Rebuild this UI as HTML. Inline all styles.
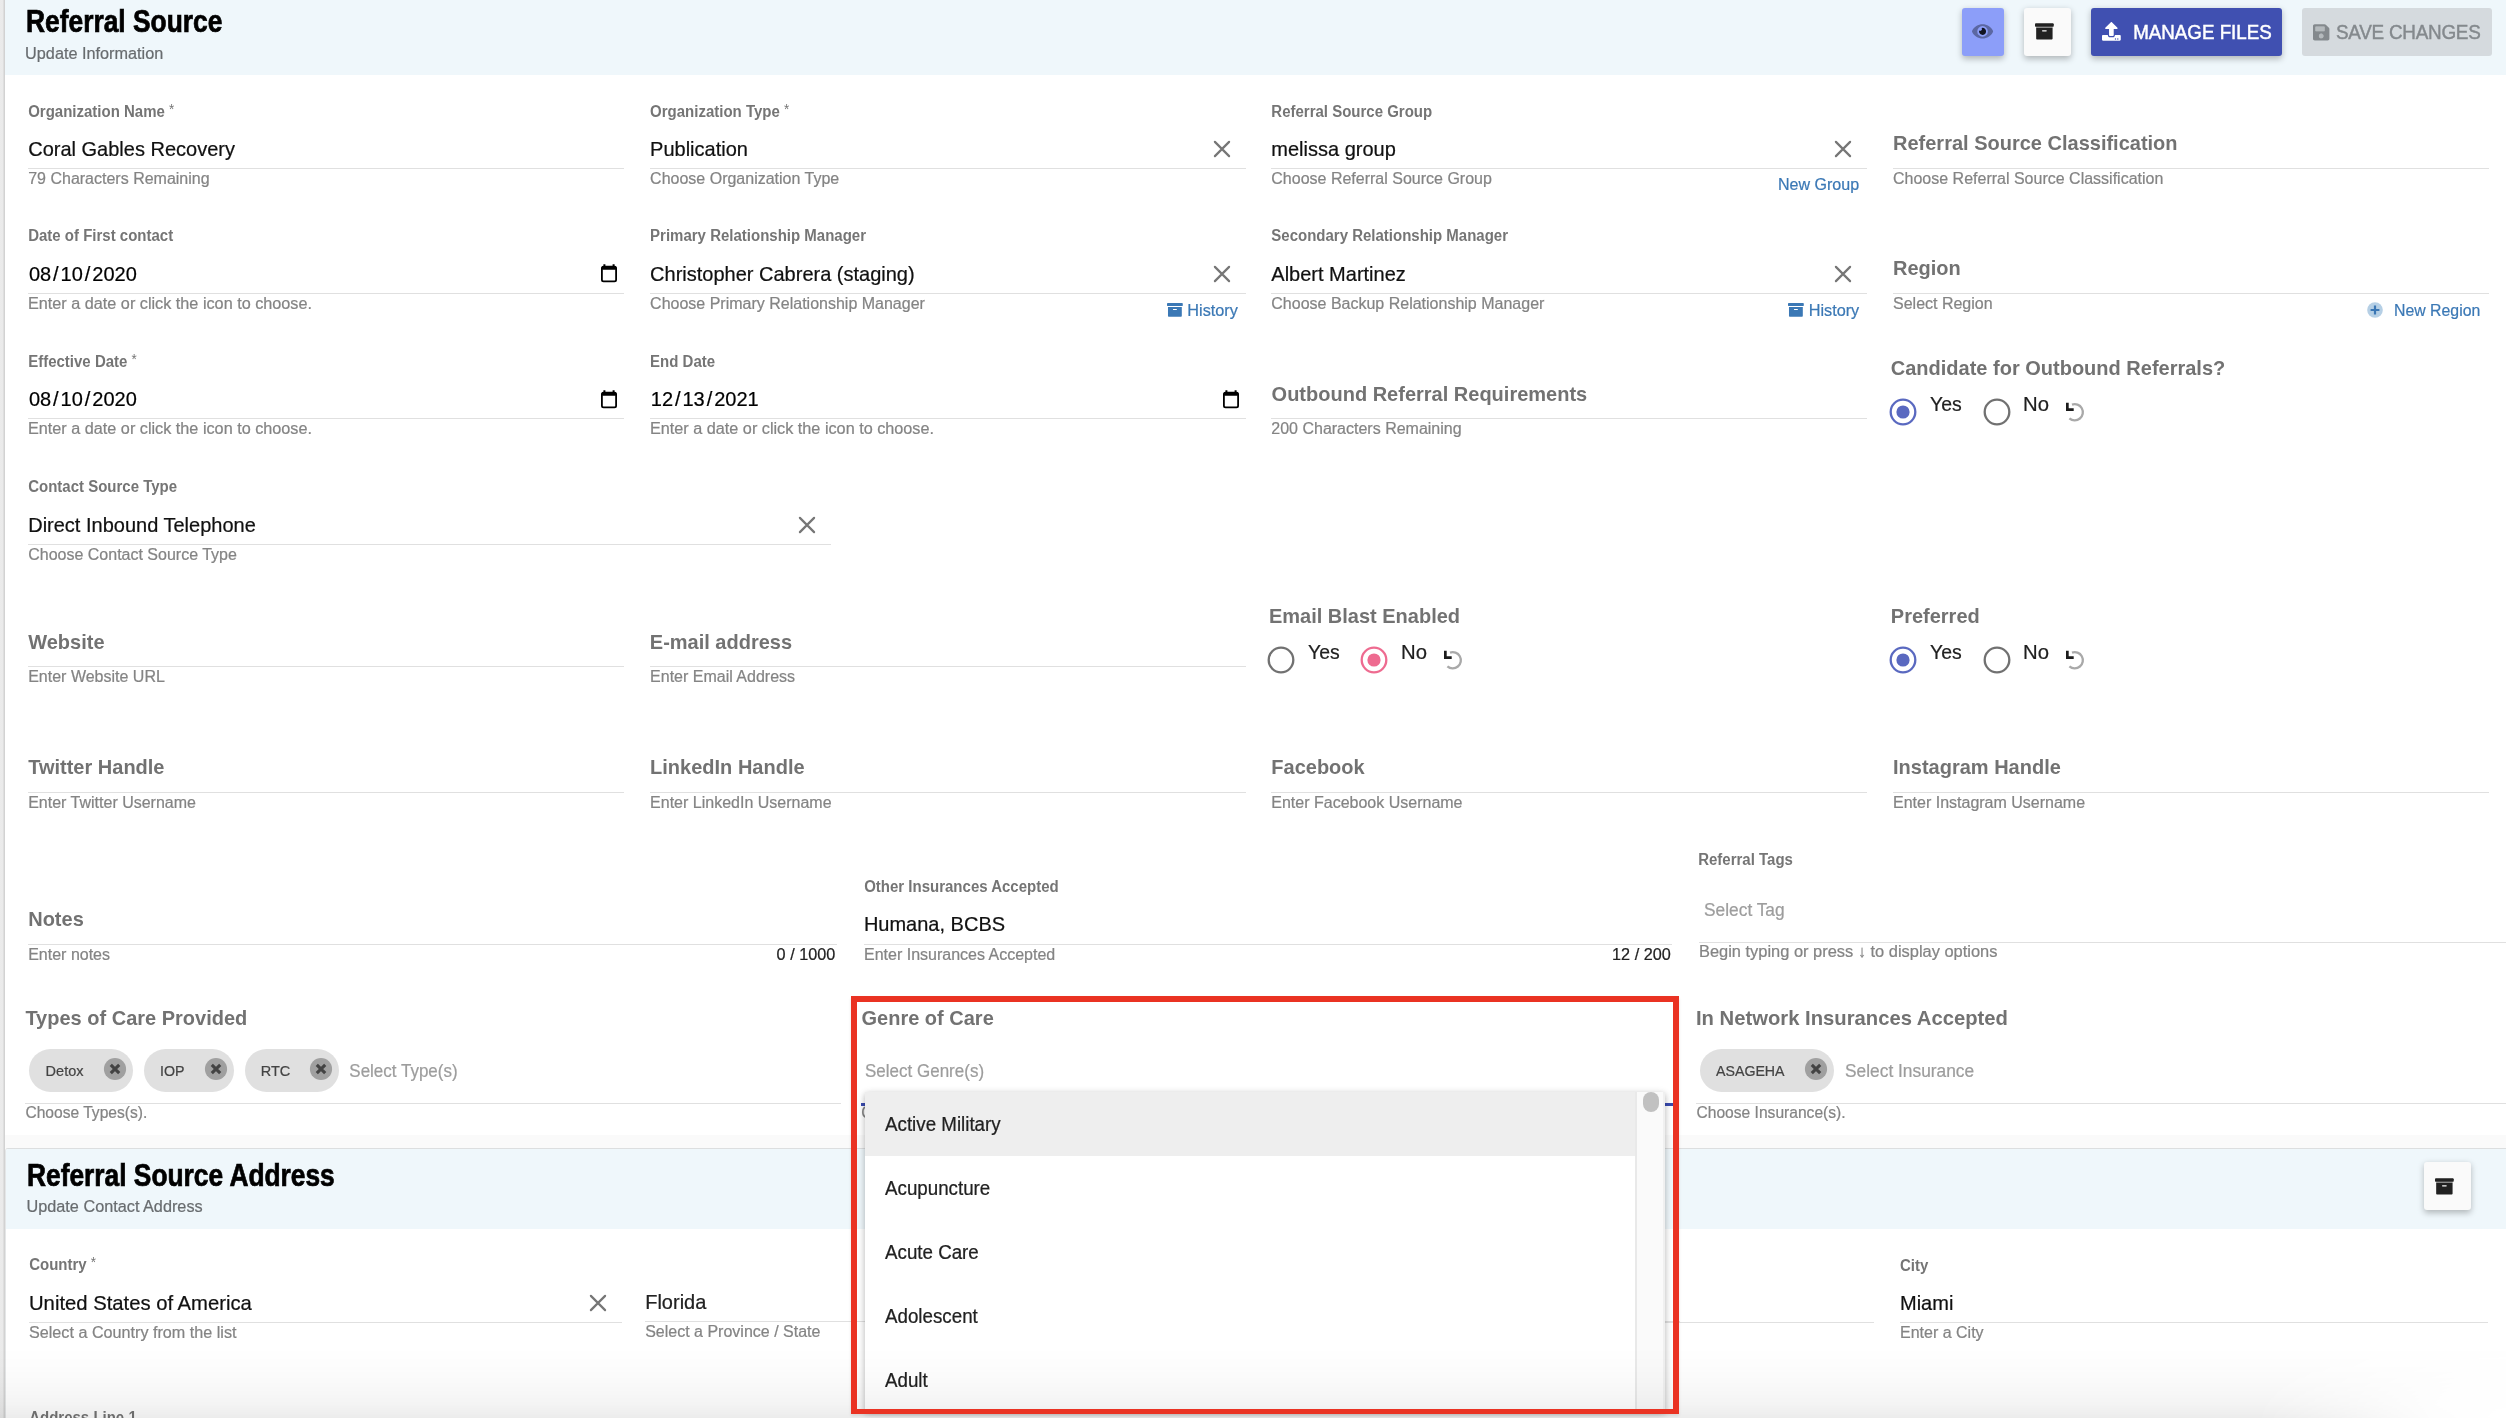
<!DOCTYPE html>
<html lang="en">
<head>
<meta charset="utf-8">
<title>Referral Source</title>
<style>
*{box-sizing:border-box;margin:0;padding:0}
html,body{width:2506px;height:1418px;overflow:hidden;background:#fafafa}
body{position:relative;font-family:"Liberation Sans",Arial,Helvetica,sans-serif}
.t{position:absolute;white-space:nowrap;line-height:1}
.r{position:absolute}
.i{position:absolute;display:block;overflow:visible}
.sl{padding:0 1.95px}
#w{position:absolute;left:0;top:0;width:2506px;height:1418px;will-change:transform}
</style>
</head>
<body>
<div id="w">
<div class="r" style="left:0;top:0;width:5px;height:1418px;background:linear-gradient(90deg,#ebebeb 0,#eaeaea 55%,#d6d6d6 80%,#cecece 100%)"></div>
<div class="r" style="left:5px;top:0px;width:2501px;height:1135px;background:#fff;"></div>
<div class="r" style="left:5px;top:0px;width:2501px;height:74.7px;background:#eff7fb;"></div>
<div class="r" style="left:5px;top:1135px;width:2501px;height:13.4px;background:#fafafa;"></div>
<div class="r" style="left:5px;top:1148.1px;width:2501px;height:270px;background:#fff;border-top:1px solid #dcdedf;border-left:1px solid #e4e6e7;border-radius:3px 0 0 0"></div>
<div class="r" style="left:6px;top:1149.1px;width:2500px;height:79.7px;background:#eff7fb;border-radius:2.5px 0 0 0"></div>
<div class="t" style="left:25.6px;top:7px;font-size:30px;font-weight:700;color:#000;transform:scale(0.879,1.04);transform-origin:0 25px;-webkit-text-stroke:.7px #000">Referral Source</div>
<div class="t" style="left:25.1px;top:45px;font-size:16.25px;-webkit-text-stroke:.22px;color:#686c6f;transform:scale(1,1.04);transform-origin:0 14px;">Update Information</div>
<div class="r" style="left:1962px;top:8px;width:42px;height:48px;background:#8c9ef9;border-radius:3px;box-shadow:0 2.5px 6px rgba(0,0,0,.26)"></div>
<svg class="i" style="left:1972.05px;top:22.1px" width="21.1" height="18.75" viewBox="0 0 576 512"><path fill="rgba(0,0,0,.87)" fill-opacity=".4" d="M572.52 241.4C518.29 135.59 410.93 64 288 64S57.68 135.64 3.48 241.41a32.350 32.350 0 0 0 0 29.190C57.710 376.41 165.07 448 288 448s230.32-71.640 284.52-177.41a32.350 32.350 0 0 0 0-29.190zM288 400a144 144 0 1 1 144-144 143.930 143.930 0 0 1-144 144z"/><path fill="rgba(0,0,0,.87)" d="M288 160a95.310 95.310 0 0 0-25.310 3.790 47.850 47.850 0 0 1-66.900 66.900A95.780 95.780 0 1 0 288 160z"/></svg>
<div class="r" style="left:2024px;top:8px;width:47px;height:48px;background:#fafafa;border-radius:3px;box-shadow:0 2.5px 6px rgba(0,0,0,.26)"></div>
<svg class="i" style="left:2034.8px;top:22.15px" width="18.75" height="18.75" viewBox="0 0 512 512"><rect x="32" y="120" width="448" height="48" fill="#adadad"/><g fill="#212121"><path d="M480 32H32C14.3 32 0 46.3 0 64v48c0 8.8 7.2 16 16 16h480c8.8 0 16-7.2 16-16V64c0-17.700-14.3-32-32-32z"/><path d="M32 448c0 17.700 14.3 32 32 32h384c17.700 0 32-14.3 32-32V160H32v288zm160-212c0-6.600 5.400-12 12-12h104c6.600 0 12 5.400 12 12v8c0 6.600-5.400 12-12 12H204c-6.600 0-12-5.400-12-12v-8z"/></g></svg>
<div class="r" style="left:2091px;top:8px;width:191px;height:48px;background:#4050b1;border-radius:3px;box-shadow:0 2.5px 6px rgba(0,0,0,.26)"></div>
<svg class="i" style="left:2101.8px;top:22.2px" width="18.75" height="18.75" viewBox="0 0 512 512" fill="#fff"><path d="M296 384h-80c-13.300 0-24-10.700-24-24V192h-87.700c-17.800 0-26.700-21.500-14.100-34.100L242.300 5.700c7.500-7.500 19.800-7.500 27.300 0l152.200 152.200c12.600 12.600 3.700 34.100-14.100 34.100H320v168c0 13.300-10.700 24-24 24z"/><path d="M512 376v112c0 13.300-10.700 24-24 24H24c-13.300 0-24-10.700-24-24V376c0-13.300 10.700-24 24-24h136v8c0 30.900 25.100 56 56 56h80c30.900 0 56-25.100 56-56v-8h136c13.300 0 24 10.700 24 24zm-124 88c0-11-9-20-20-20s-20 9-20 20 9 20 20 20 20-9 20-20zm64 0c0-11-9-20-20-20s-20 9-20 20 9 20 20 20 20-9 20-20z"/></svg>
<div class="t" style="left:2133.2px;top:24px;font-size:18.75px;color:#fff;transform:scale(1,1.04);transform-origin:0 15px;-webkit-text-stroke:.45px #fff">MANAGE FILES</div>
<div class="r" style="left:2302px;top:8px;width:190px;height:48px;background:#d5dade;border-radius:3px"></div>
<svg class="i" style="left:2312.8px;top:22.8px" width="16.4" height="18.75" viewBox="0 0 448 512"><path fill="#84898d" fill-rule="evenodd" d="M433.941 129.941l-83.882-83.882A48 48 0 0 0 316.118 32H48C21.490 32 0 53.490 0 80v352c0 26.510 21.490 48 48 48h352c26.510 0 48-21.490 48-48V163.882a48 48 0 0 0-14.059-33.941zM224 416c-35.346 0-64-28.654-64-64 0-35.346 28.654-64 64-64s64 28.654 64 64c0 35.346-28.654 64-64 64zm96-304.520V212c0 6.627-5.373 12-12 12H76c-6.627 0-12-5.373-12-12V108c0-6.627 5.373-12 12-12h228.520c3.183 0 6.235 1.264 8.485 3.515l3.480 3.480A11.996 11.996 0 0 1 320 111.480z"/><path fill="#84898d" fill-opacity=".4" d="M64 96h256v128H64z"/><circle cx="224" cy="352" r="64" fill="#84898d" fill-opacity=".4"/></svg>
<div class="t" style="left:2336.4px;top:24px;font-size:18.75px;color:#84898d;transform:scale(1.008,1.04);transform-origin:0 15px;letter-spacing:-.27px;-webkit-text-stroke:.4px #84898d">SAVE CHANGES</div>
<div class="t" style="left:28.2px;top:104px;font-size:15px;font-weight:700;color:#757575;transform:scale(1,1.04);transform-origin:0 13px;">Organization Name <span style="font-size:13.5px;vertical-align:top;position:relative;top:-1px;font-weight:400">*</span></div>
<div class="t" style="left:28.2px;top:139px;font-size:20px;-webkit-text-stroke:.22px;color:#111;transform:scale(1,1.04);transform-origin:0 17px;">Coral Gables Recovery</div>
<div class="r" style="left:28.2px;top:168px;width:595.6px;height:1.2px;background:#e0e0e0;"></div>
<div class="t" style="left:28.2px;top:171px;font-size:16px;-webkit-text-stroke:.22px;color:#848484;transform:scale(1,1.04);transform-origin:0 13px;">79 Characters Remaining</div>
<div class="t" style="left:650.1px;top:104px;font-size:15px;font-weight:700;color:#757575;transform:scale(1,1.04);transform-origin:0 13px;">Organization Type <span style="font-size:13.5px;vertical-align:top;position:relative;top:-1px;font-weight:400">*</span></div>
<div class="t" style="left:650.1px;top:139px;font-size:20px;-webkit-text-stroke:.22px;color:#111;transform:scale(1,1.04);transform-origin:0 17px;">Publication</div>
<div class="r" style="left:650.1px;top:168px;width:595.7px;height:1.2px;background:#e0e0e0;"></div>
<div class="t" style="left:650.1px;top:171px;font-size:16px;-webkit-text-stroke:.22px;color:#848484;transform:scale(1,1.04);transform-origin:0 13px;">Choose Organization Type</div>
<svg class="i" style="left:1211.9px;top:139px" width="20" height="20" viewBox="-10 -10 20 20"><path d="M-7.1-7.1L7.1 7.1M7.1-7.1L-7.1 7.1" stroke="#767676" stroke-width="2.2" stroke-linecap="round" fill="none"/></svg>
<div class="t" style="left:1271.3px;top:104px;font-size:15px;font-weight:700;color:#757575;transform:scale(1,1.04);transform-origin:0 13px;">Referral Source Group</div>
<div class="t" style="left:1271.3px;top:139px;font-size:20px;-webkit-text-stroke:.22px;color:#111;transform:scale(1,1.04);transform-origin:0 17px;">melissa group</div>
<div class="r" style="left:1271.3px;top:168px;width:595.6px;height:1.2px;background:#e0e0e0;"></div>
<div class="t" style="left:1271.3px;top:171px;font-size:16px;-webkit-text-stroke:.22px;color:#848484;transform:scale(1,1.04);transform-origin:0 13px;">Choose Referral Source Group</div>
<svg class="i" style="left:1833px;top:139px" width="20" height="20" viewBox="-10 -10 20 20"><path d="M-7.1-7.1L7.1 7.1M7.1-7.1L-7.1 7.1" stroke="#767676" stroke-width="2.2" stroke-linecap="round" fill="none"/></svg>
<div class="t" style="left:1778.1px;top:176px;font-size:16.25px;-webkit-text-stroke:.22px;color:#3b78b5;transform:scale(0.987,1.04);transform-origin:0 14px;">New Group</div>
<div class="t" style="left:1893px;top:133px;font-size:20px;font-weight:700;color:#727272;transform:scale(1,1.04);transform-origin:0 17px;">Referral Source Classification</div>
<div class="r" style="left:1893px;top:168px;width:595.8px;height:1.2px;background:#e0e0e0;"></div>
<div class="t" style="left:1893px;top:171px;font-size:16px;-webkit-text-stroke:.22px;color:#848484;transform:scale(1,1.04);transform-origin:0 13px;">Choose Referral Source Classification</div>
<div class="t" style="left:28.2px;top:228px;font-size:15px;font-weight:700;color:#757575;transform:scale(1,1.04);transform-origin:0 13px;">Date of First contact</div>
<div class="t" style="left:28.9px;top:264px;font-size:20px;-webkit-text-stroke:.22px;color:#000;transform:scale(1,1.04);transform-origin:0 17px;">08<span class="sl">/</span>10<span class="sl">/</span>2020</div>
<svg class="i" style="left:601px;top:264.2px" width="16" height="20" viewBox="0 0 16 20"><path d="M2.4 0.3h2v2.2h-2zM11.6 0.3h2v2.2h-2z" fill="#000"/><rect x="0.9" y="2.7" width="14.2" height="14.6" rx="1.6" fill="none" stroke="#000" stroke-width="1.8"/><rect x="0.9" y="2.2" width="14.2" height="3.6" rx="1" fill="#000"/></svg>
<div class="r" style="left:28.2px;top:293px;width:595.6px;height:1.2px;background:#e0e0e0;"></div>
<div class="t" style="left:28.2px;top:296px;font-size:16px;-webkit-text-stroke:.22px;color:#848484;transform:scale(1.0137,1.04);transform-origin:0 13px;">Enter a date or click the icon to choose.</div>
<div class="t" style="left:650.1px;top:228px;font-size:15px;font-weight:700;color:#757575;transform:scale(1,1.04);transform-origin:0 13px;">Primary Relationship Manager</div>
<div class="t" style="left:650.1px;top:264px;font-size:20px;-webkit-text-stroke:.22px;color:#111;transform:scale(1,1.04);transform-origin:0 17px;">Christopher Cabrera (staging)</div>
<div class="r" style="left:650.1px;top:293px;width:595.7px;height:1.2px;background:#e0e0e0;"></div>
<div class="t" style="left:650.1px;top:296px;font-size:16px;-webkit-text-stroke:.22px;color:#848484;transform:scale(1,1.04);transform-origin:0 13px;">Choose Primary Relationship Manager</div>
<svg class="i" style="left:1211.9px;top:264px" width="20" height="20" viewBox="-10 -10 20 20"><path d="M-7.1-7.1L7.1 7.1M7.1-7.1L-7.1 7.1" stroke="#767676" stroke-width="2.2" stroke-linecap="round" fill="none"/></svg>
<svg class="i" style="left:1167px;top:302.1px" width="15.8" height="15.8" viewBox="0 0 512 512" fill="#3b78b5"><path d="M480 32H32C14.3 32 0 46.3 0 64v48c0 8.8 7.2 16 16 16h480c8.8 0 16-7.2 16-16V64c0-17.700-14.3-32-32-32z"/><path d="M32 448c0 17.700 14.3 32 32 32h384c17.700 0 32-14.3 32-32V160H32v288zm160-212c0-6.600 5.400-12 12-12h104c6.600 0 12 5.400 12 12v8c0 6.600-5.400 12-12 12H204c-6.600 0-12-5.400-12-12v-8z"/></svg>
<div class="t" style="left:1187.3px;top:302px;font-size:16.25px;-webkit-text-stroke:.22px;color:#3b78b5;transform:scale(1,1.04);transform-origin:0 14px;">History</div>
<div class="t" style="left:1271.3px;top:228px;font-size:15px;font-weight:700;color:#757575;transform:scale(1,1.04);transform-origin:0 13px;">Secondary Relationship Manager</div>
<div class="t" style="left:1271.3px;top:264px;font-size:20px;-webkit-text-stroke:.22px;color:#111;transform:scale(1,1.04);transform-origin:0 17px;">Albert Martinez</div>
<div class="r" style="left:1271.3px;top:293px;width:595.6px;height:1.2px;background:#e0e0e0;"></div>
<div class="t" style="left:1271.3px;top:296px;font-size:16px;-webkit-text-stroke:.22px;color:#848484;transform:scale(1,1.04);transform-origin:0 13px;">Choose Backup Relationship Manager</div>
<svg class="i" style="left:1833px;top:264px" width="20" height="20" viewBox="-10 -10 20 20"><path d="M-7.1-7.1L7.1 7.1M7.1-7.1L-7.1 7.1" stroke="#767676" stroke-width="2.2" stroke-linecap="round" fill="none"/></svg>
<svg class="i" style="left:1788.4px;top:302.1px" width="15.8" height="15.8" viewBox="0 0 512 512" fill="#3b78b5"><path d="M480 32H32C14.3 32 0 46.3 0 64v48c0 8.8 7.2 16 16 16h480c8.8 0 16-7.2 16-16V64c0-17.700-14.3-32-32-32z"/><path d="M32 448c0 17.700 14.3 32 32 32h384c17.700 0 32-14.3 32-32V160H32v288zm160-212c0-6.600 5.400-12 12-12h104c6.600 0 12 5.400 12 12v8c0 6.600-5.400 12-12 12H204c-6.600 0-12-5.400-12-12v-8z"/></svg>
<div class="t" style="left:1808.7px;top:302px;font-size:16.25px;-webkit-text-stroke:.22px;color:#3b78b5;transform:scale(1,1.04);transform-origin:0 14px;">History</div>
<div class="t" style="left:1893px;top:258px;font-size:20px;font-weight:700;color:#727272;transform:scale(1,1.04);transform-origin:0 17px;">Region</div>
<div class="r" style="left:1893px;top:293px;width:595.8px;height:1.2px;background:#e0e0e0;"></div>
<div class="t" style="left:1893px;top:296px;font-size:16px;-webkit-text-stroke:.22px;color:#848484;transform:scale(1,1.04);transform-origin:0 13px;">Select Region</div>
<svg class="i" style="left:2366.7px;top:301.9px" width="16" height="16" viewBox="-8 -8 16 16"><circle r="7.8" fill="#337ab7" fill-opacity=".36"/><path d="M-4.4 0H4.4M0-4.4V4.4" stroke="#3a76b4" stroke-width="2.2"/></svg>
<div class="t" style="left:2394.2px;top:302px;font-size:16.25px;-webkit-text-stroke:.22px;color:#3b78b5;transform:scale(0.975,1.04);transform-origin:0 14px;">New Region</div>
<div class="t" style="left:28.2px;top:354px;font-size:15px;font-weight:700;color:#757575;transform:scale(1,1.04);transform-origin:0 13px;">Effective Date <span style="font-size:13.5px;vertical-align:top;position:relative;top:-1px;font-weight:400">*</span></div>
<div class="t" style="left:28.9px;top:389px;font-size:20px;-webkit-text-stroke:.22px;color:#000;transform:scale(1,1.04);transform-origin:0 17px;">08<span class="sl">/</span>10<span class="sl">/</span>2020</div>
<svg class="i" style="left:601px;top:389.6px" width="16" height="20" viewBox="0 0 16 20"><path d="M2.4 0.3h2v2.2h-2zM11.6 0.3h2v2.2h-2z" fill="#000"/><rect x="0.9" y="2.7" width="14.2" height="14.6" rx="1.6" fill="none" stroke="#000" stroke-width="1.8"/><rect x="0.9" y="2.2" width="14.2" height="3.6" rx="1" fill="#000"/></svg>
<div class="r" style="left:28.2px;top:418px;width:595.6px;height:1.2px;background:#e0e0e0;"></div>
<div class="t" style="left:28.2px;top:421px;font-size:16px;-webkit-text-stroke:.22px;color:#848484;transform:scale(1.0137,1.04);transform-origin:0 13px;">Enter a date or click the icon to choose.</div>
<div class="t" style="left:650.1px;top:354px;font-size:15px;font-weight:700;color:#757575;transform:scale(1,1.04);transform-origin:0 13px;">End Date</div>
<div class="t" style="left:650.8px;top:389px;font-size:20px;-webkit-text-stroke:.22px;color:#000;transform:scale(1,1.04);transform-origin:0 17px;">12<span class="sl">/</span>13<span class="sl">/</span>2021</div>
<svg class="i" style="left:1223.2px;top:389.6px" width="16" height="20" viewBox="0 0 16 20"><path d="M2.4 0.3h2v2.2h-2zM11.6 0.3h2v2.2h-2z" fill="#000"/><rect x="0.9" y="2.7" width="14.2" height="14.6" rx="1.6" fill="none" stroke="#000" stroke-width="1.8"/><rect x="0.9" y="2.2" width="14.2" height="3.6" rx="1" fill="#000"/></svg>
<div class="r" style="left:650.1px;top:418px;width:595.7px;height:1.2px;background:#e0e0e0;"></div>
<div class="t" style="left:650.1px;top:421px;font-size:16px;-webkit-text-stroke:.22px;color:#848484;transform:scale(1.0137,1.04);transform-origin:0 13px;">Enter a date or click the icon to choose.</div>
<div class="t" style="left:1271.6px;top:384px;font-size:20px;font-weight:700;color:#727272;transform:scale(1,1.04);transform-origin:0 17px;">Outbound Referral Requirements</div>
<div class="r" style="left:1271.3px;top:418px;width:595.6px;height:1.2px;background:#e0e0e0;"></div>
<div class="t" style="left:1271.3px;top:421px;font-size:16px;-webkit-text-stroke:.22px;color:#848484;transform:scale(1,1.04);transform-origin:0 13px;">200 Characters Remaining</div>
<div class="t" style="left:1890.8px;top:358px;font-size:20px;font-weight:700;color:#727272;transform:scale(1,1.04);transform-origin:0 17px;">Candidate for Outbound Referrals?</div>
<svg class="i" style="left:1889.4px;top:398px" width="28" height="28" viewBox="-14 -14 28 28"><circle r="12.3" fill="none" stroke="#5a69c0" stroke-width="2.3"/><circle r="6.6" fill="#5a69c0"/></svg>
<div class="t" style="left:1929.8px;top:394px;font-size:20px;-webkit-text-stroke:.22px;color:#1f1f1f;transform:scale(0.972,1.04);transform-origin:0 17px;">Yes</div>
<svg class="i" style="left:1982.5px;top:398px" width="28" height="28" viewBox="-14 -14 28 28"><circle r="12.3" fill="none" stroke="#717171" stroke-width="2.3"/></svg>
<div class="t" style="left:2022.9px;top:394px;font-size:20px;-webkit-text-stroke:.22px;color:#1f1f1f;transform:scale(1.015,1.04);transform-origin:0 17px;">No</div>
<svg class="i" style="left:2064.1px;top:400px" width="24" height="24" viewBox="-10.6 -12 24 24"><path d="M-2.6 -7.4A8.1 8.1 0 1 1 -5.2 6.3" fill="none" stroke="#a9a9a9" stroke-width="2.3"/><path d="M-8.6 -9.2h2.7v5.4h5.0v2.7h-7.7z" fill="#1c1c1c"/></svg>
<div class="t" style="left:28.2px;top:479px;font-size:15px;font-weight:700;color:#757575;transform:scale(1,1.04);transform-origin:0 13px;">Contact Source Type</div>
<div class="t" style="left:28.2px;top:515px;font-size:20px;-webkit-text-stroke:.22px;color:#111;transform:scale(1,1.04);transform-origin:0 17px;">Direct Inbound Telephone</div>
<div class="r" style="left:28.2px;top:544px;width:802.4px;height:1.2px;background:#e0e0e0;"></div>
<div class="t" style="left:28.2px;top:547px;font-size:16px;-webkit-text-stroke:.22px;color:#848484;transform:scale(1,1.04);transform-origin:0 13px;">Choose Contact Source Type</div>
<svg class="i" style="left:796.7px;top:515.1px" width="20" height="20" viewBox="-10 -10 20 20"><path d="M-7.1-7.1L7.1 7.1M7.1-7.1L-7.1 7.1" stroke="#767676" stroke-width="2.2" stroke-linecap="round" fill="none"/></svg>
<div class="t" style="left:28.2px;top:632px;font-size:20px;font-weight:700;color:#727272;transform:scale(1,1.04);transform-origin:0 17px;">Website</div>
<div class="r" style="left:28.2px;top:666px;width:595.6px;height:1.2px;background:#e0e0e0;"></div>
<div class="t" style="left:28.2px;top:669px;font-size:16px;-webkit-text-stroke:.22px;color:#848484;transform:scale(1,1.04);transform-origin:0 13px;">Enter Website URL</div>
<div class="t" style="left:649.8px;top:632px;font-size:20px;font-weight:700;color:#727272;transform:scale(1,1.04);transform-origin:0 17px;">E-mail address</div>
<div class="r" style="left:650.1px;top:666px;width:595.7px;height:1.2px;background:#e0e0e0;"></div>
<div class="t" style="left:650.1px;top:669px;font-size:16px;-webkit-text-stroke:.22px;color:#848484;transform:scale(1,1.04);transform-origin:0 13px;">Enter Email Address</div>
<div class="t" style="left:1268.9px;top:606px;font-size:20px;font-weight:700;color:#727272;transform:scale(1,1.04);transform-origin:0 17px;">Email Blast Enabled</div>
<svg class="i" style="left:1267.3px;top:646px" width="28" height="28" viewBox="-14 -14 28 28"><circle r="12.3" fill="none" stroke="#717171" stroke-width="2.3"/></svg>
<div class="t" style="left:1307.7px;top:642px;font-size:20px;-webkit-text-stroke:.22px;color:#1f1f1f;transform:scale(0.972,1.04);transform-origin:0 17px;">Yes</div>
<svg class="i" style="left:1360.4px;top:646px" width="28" height="28" viewBox="-14 -14 28 28"><circle r="12.3" fill="none" stroke="#ee6b90" stroke-width="2.3"/><circle r="6.6" fill="#ee6b90"/></svg>
<div class="t" style="left:1400.8px;top:642px;font-size:20px;-webkit-text-stroke:.22px;color:#1f1f1f;transform:scale(1.015,1.04);transform-origin:0 17px;">No</div>
<svg class="i" style="left:1442px;top:648px" width="24" height="24" viewBox="-10.6 -12 24 24"><path d="M-2.6 -7.4A8.1 8.1 0 1 1 -5.2 6.3" fill="none" stroke="#a9a9a9" stroke-width="2.3"/><path d="M-8.6 -9.2h2.7v5.4h5.0v2.7h-7.7z" fill="#1c1c1c"/></svg>
<div class="t" style="left:1890.8px;top:606px;font-size:20px;font-weight:700;color:#727272;transform:scale(1,1.04);transform-origin:0 17px;">Preferred</div>
<svg class="i" style="left:1889.4px;top:646px" width="28" height="28" viewBox="-14 -14 28 28"><circle r="12.3" fill="none" stroke="#5a69c0" stroke-width="2.3"/><circle r="6.6" fill="#5a69c0"/></svg>
<div class="t" style="left:1929.8px;top:642px;font-size:20px;-webkit-text-stroke:.22px;color:#1f1f1f;transform:scale(0.972,1.04);transform-origin:0 17px;">Yes</div>
<svg class="i" style="left:1982.5px;top:646px" width="28" height="28" viewBox="-14 -14 28 28"><circle r="12.3" fill="none" stroke="#717171" stroke-width="2.3"/></svg>
<div class="t" style="left:2022.9px;top:642px;font-size:20px;-webkit-text-stroke:.22px;color:#1f1f1f;transform:scale(1.015,1.04);transform-origin:0 17px;">No</div>
<svg class="i" style="left:2064.1px;top:648px" width="24" height="24" viewBox="-10.6 -12 24 24"><path d="M-2.6 -7.4A8.1 8.1 0 1 1 -5.2 6.3" fill="none" stroke="#a9a9a9" stroke-width="2.3"/><path d="M-8.6 -9.2h2.7v5.4h5.0v2.7h-7.7z" fill="#1c1c1c"/></svg>
<div class="t" style="left:28.2px;top:757px;font-size:20px;font-weight:700;color:#727272;transform:scale(1,1.04);transform-origin:0 17px;">Twitter Handle</div>
<div class="r" style="left:28.2px;top:792px;width:595.6px;height:1.2px;background:#e0e0e0;"></div>
<div class="t" style="left:28.2px;top:795px;font-size:16px;-webkit-text-stroke:.22px;color:#848484;transform:scale(1,1.04);transform-origin:0 13px;">Enter Twitter Username</div>
<div class="t" style="left:650.1px;top:757px;font-size:20px;font-weight:700;color:#727272;transform:scale(1,1.04);transform-origin:0 17px;">LinkedIn Handle</div>
<div class="r" style="left:650.1px;top:792px;width:595.7px;height:1.2px;background:#e0e0e0;"></div>
<div class="t" style="left:650.1px;top:795px;font-size:16px;-webkit-text-stroke:.22px;color:#848484;transform:scale(1,1.04);transform-origin:0 13px;">Enter LinkedIn Username</div>
<div class="t" style="left:1271.3px;top:757px;font-size:20px;font-weight:700;color:#727272;transform:scale(1,1.04);transform-origin:0 17px;">Facebook</div>
<div class="r" style="left:1271.3px;top:792px;width:595.6px;height:1.2px;background:#e0e0e0;"></div>
<div class="t" style="left:1271.3px;top:795px;font-size:16px;-webkit-text-stroke:.22px;color:#848484;transform:scale(1,1.04);transform-origin:0 13px;">Enter Facebook Username</div>
<div class="t" style="left:1893px;top:757px;font-size:20px;font-weight:700;color:#727272;transform:scale(1,1.04);transform-origin:0 17px;">Instagram Handle</div>
<div class="r" style="left:1893px;top:792px;width:595.8px;height:1.2px;background:#e0e0e0;"></div>
<div class="t" style="left:1893px;top:795px;font-size:16px;-webkit-text-stroke:.22px;color:#848484;transform:scale(1,1.04);transform-origin:0 13px;">Enter Instagram Username</div>
<div class="t" style="left:28.2px;top:909px;font-size:20px;font-weight:700;color:#727272;transform:scale(1,1.04);transform-origin:0 17px;">Notes</div>
<div class="r" style="left:28.2px;top:944px;width:809.3px;height:1.2px;background:#e0e0e0;"></div>
<div class="t" style="left:28.2px;top:947px;font-size:16px;-webkit-text-stroke:.22px;color:#848484;transform:scale(1,1.04);transform-origin:0 13px;">Enter notes</div>
<div class="t" style="right:1670.7px;top:946px;font-size:16.25px;-webkit-text-stroke:.22px;color:#222;transform:scale(1,1.04);transform-origin:100% 14px;">0 / 1000</div>
<div class="t" style="left:864.2px;top:879px;font-size:15px;font-weight:700;color:#757575;transform:scale(1,1.04);transform-origin:0 13px;">Other Insurances Accepted</div>
<div class="t" style="left:863.9px;top:914px;font-size:20px;-webkit-text-stroke:.22px;color:#111;transform:scale(1,1.04);transform-origin:0 17px;">Humana, BCBS</div>
<div class="r" style="left:864px;top:944px;width:807.5px;height:1.2px;background:#e0e0e0;"></div>
<div class="t" style="left:864px;top:947px;font-size:16px;-webkit-text-stroke:.22px;color:#848484;transform:scale(1,1.04);transform-origin:0 13px;">Enter Insurances Accepted</div>
<div class="t" style="right:835.2px;top:946px;font-size:16.25px;-webkit-text-stroke:.22px;color:#222;transform:scale(1,1.04);transform-origin:100% 14px;">12 / 200</div>
<div class="t" style="left:1698.2px;top:852px;font-size:15px;font-weight:700;color:#757575;transform:scale(1,1.04);transform-origin:0 13px;">Referral Tags</div>
<div class="t" style="left:1704.2px;top:902px;font-size:17px;-webkit-text-stroke:.22px;color:#9d9d9d;transform:scale(1.02,1.04);transform-origin:0 14px;">Select Tag</div>
<div class="r" style="left:1698.5px;top:942px;width:807.5px;height:1.2px;background:#e0e0e0;"></div>
<div class="t" style="left:1698.6px;top:944px;font-size:16px;-webkit-text-stroke:.22px;color:#848484;transform:scale(1.026,1.04);transform-origin:0 13px;">Begin typing or press ↓ to display options</div>
<div class="t" style="left:25.4px;top:1008px;font-size:20px;font-weight:700;color:#727272;transform:scale(1,1.04);transform-origin:0 17px;">Types of Care Provided</div>
<div class="r" style="left:28.8px;top:1048.9px;width:104.2px;height:43px;background:#e0e0e0;border-radius:21.5px"></div>
<div class="t" style="left:45.6px;top:1064px;font-size:14.5px;-webkit-text-stroke:.22px;color:#444;transform:scale(1,1.04);transform-origin:0 12px;">Detox</div>
<svg class="i" style="left:103px;top:1057.4px" width="24" height="24" viewBox="-12 -12 24 24"><circle r="11.1" fill="#a0a0a0"/><path d="M-4.2-4.2L4.2 4.2M4.2-4.2L-4.2 4.2" stroke="#434343" stroke-width="3.1" stroke-linecap="butt"/></svg>
<div class="r" style="left:143.8px;top:1048.9px;width:90.4px;height:43px;background:#e0e0e0;border-radius:21.5px"></div>
<div class="t" style="left:160.4px;top:1064px;font-size:14.5px;-webkit-text-stroke:.22px;color:#444;transform:scale(0.98,1.04);transform-origin:0 12px;">IOP</div>
<svg class="i" style="left:204.2px;top:1057.4px" width="24" height="24" viewBox="-12 -12 24 24"><circle r="11.1" fill="#a0a0a0"/><path d="M-4.2-4.2L4.2 4.2M4.2-4.2L-4.2 4.2" stroke="#434343" stroke-width="3.1" stroke-linecap="butt"/></svg>
<div class="r" style="left:245.3px;top:1048.9px;width:93.5px;height:43px;background:#e0e0e0;border-radius:21.5px"></div>
<div class="t" style="left:260.8px;top:1064px;font-size:14.5px;-webkit-text-stroke:.22px;color:#444;transform:scale(1,1.04);transform-origin:0 12px;">RTC</div>
<svg class="i" style="left:308.8px;top:1057.4px" width="24" height="24" viewBox="-12 -12 24 24"><circle r="11.1" fill="#a0a0a0"/><path d="M-4.2-4.2L4.2 4.2M4.2-4.2L-4.2 4.2" stroke="#434343" stroke-width="3.1" stroke-linecap="butt"/></svg>
<div class="t" style="left:349.3px;top:1063px;font-size:17px;-webkit-text-stroke:.22px;color:#9d9d9d;transform:scale(1,1.04);transform-origin:0 14px;">Select Type(s)</div>
<div class="r" style="left:25.2px;top:1103px;width:815.8px;height:1.2px;background:#e0e0e0;"></div>
<div class="t" style="left:25.4px;top:1105px;font-size:15.6px;-webkit-text-stroke:.22px;color:#848484;transform:scale(1,1.04);transform-origin:0 13px;">Choose Types(s).</div>
<div class="t" style="left:861.5px;top:1008px;font-size:20px;font-weight:700;color:#727272;transform:scale(1,1.04);transform-origin:0 17px;">Genre of Care</div>
<div class="t" style="left:865px;top:1063px;font-size:17px;-webkit-text-stroke:.22px;color:#9d9d9d;transform:scale(1,1.04);transform-origin:0 14px;">Select Genre(s)</div>
<div class="r" style="left:861px;top:1103px;width:812.5px;height:2.6px;background:#3a4bb0;"></div>
<div class="t" style="left:861.3px;top:1105px;font-size:15.6px;-webkit-text-stroke:.22px;color:#848484;transform:scale(1,1.04);transform-origin:0 13px;">Choose Genre(s).</div>
<div class="t" style="left:1696.4px;top:1008px;font-size:20px;font-weight:700;color:#727272;transform:scale(1.012,1.04);transform-origin:0 17px;">In Network Insurances Accepted</div>
<div class="r" style="left:1700px;top:1048.9px;width:134.1px;height:43px;background:#e0e0e0;border-radius:21.5px"></div>
<div class="t" style="left:1716.2px;top:1064px;font-size:14.5px;-webkit-text-stroke:.22px;color:#444;transform:scale(0.978,1.04);transform-origin:0 12px;">ASAGEHA</div>
<svg class="i" style="left:1804.1px;top:1057.4px" width="24" height="24" viewBox="-12 -12 24 24"><circle r="11.1" fill="#a0a0a0"/><path d="M-4.2-4.2L4.2 4.2M4.2-4.2L-4.2 4.2" stroke="#434343" stroke-width="3.1" stroke-linecap="butt"/></svg>
<div class="t" style="left:1844.9px;top:1063px;font-size:17px;-webkit-text-stroke:.22px;color:#9d9d9d;transform:scale(1.02,1.04);transform-origin:0 14px;">Select Insurance</div>
<div class="r" style="left:1696.3px;top:1103px;width:809.7px;height:1.2px;background:#e0e0e0;"></div>
<div class="t" style="left:1696.5px;top:1105px;font-size:15.6px;-webkit-text-stroke:.22px;color:#848484;transform:scale(1,1.04);transform-origin:0 13px;">Choose Insurance(s).</div>
<div class="t" style="left:26.5px;top:1161px;font-size:30px;font-weight:700;color:#000;transform:scale(0.8775,1.04);transform-origin:0 25px;-webkit-text-stroke:.7px #000">Referral Source Address</div>
<div class="t" style="left:26.5px;top:1198px;font-size:16.25px;-webkit-text-stroke:.22px;color:#686c6f;transform:scale(1,1.04);transform-origin:0 14px;">Update Contact Address</div>
<div class="r" style="left:2424px;top:1162px;width:47px;height:47.5px;background:#fafafa;border-radius:3px;box-shadow:0 2.5px 6px rgba(0,0,0,.26)"></div>
<svg class="i" style="left:2434.7px;top:1176.8px" width="18.75" height="18.75" viewBox="0 0 512 512"><rect x="32" y="120" width="448" height="48" fill="#adadad"/><g fill="#212121"><path d="M480 32H32C14.3 32 0 46.3 0 64v48c0 8.8 7.2 16 16 16h480c8.8 0 16-7.2 16-16V64c0-17.700-14.3-32-32-32z"/><path d="M32 448c0 17.700 14.3 32 32 32h384c17.700 0 32-14.3 32-32V160H32v288zm160-212c0-6.600 5.400-12 12-12h104c6.600 0 12 5.400 12 12v8c0 6.600-5.400 12-12 12H204c-6.600 0-12-5.400-12-12v-8z"/></g></svg>
<div class="t" style="left:29.2px;top:1257px;font-size:15px;font-weight:700;color:#757575;transform:scale(1,1.04);transform-origin:0 13px;">Country <span style="font-size:13.5px;vertical-align:top;position:relative;top:-1px;font-weight:400">*</span></div>
<div class="t" style="left:29.2px;top:1293px;font-size:20px;-webkit-text-stroke:.22px;color:#111;transform:scale(1.0125,1.04);transform-origin:0 17px;">United States of America</div>
<div class="r" style="left:29.2px;top:1322px;width:592.8px;height:1.2px;background:#e0e0e0;"></div>
<div class="t" style="left:29.2px;top:1325px;font-size:16px;-webkit-text-stroke:.22px;color:#848484;transform:scale(1.01,1.04);transform-origin:0 13px;">Select a Country from the list</div>
<svg class="i" style="left:587.8px;top:1293.1px" width="20" height="20" viewBox="-10 -10 20 20"><path d="M-7.1-7.1L7.1 7.1M7.1-7.1L-7.1 7.1" stroke="#767676" stroke-width="2.2" stroke-linecap="round" fill="none"/></svg>
<div class="t" style="left:645.2px;top:1292px;font-size:20px;-webkit-text-stroke:.22px;color:#222;transform:scale(1,1.04);transform-origin:0 17px;">Florida</div>
<div class="r" style="left:645.2px;top:1321px;width:1034.8px;height:1.2px;background:#e0e0e0;"></div>
<div class="t" style="left:645.2px;top:1324px;font-size:16px;-webkit-text-stroke:.22px;color:#848484;transform:scale(1,1.04);transform-origin:0 13px;">Select a Province / State</div>
<div class="r" style="left:1660px;top:1322px;width:213.6px;height:1.2px;background:#e0e0e0;"></div>
<div class="t" style="left:1900px;top:1258px;font-size:15px;font-weight:700;color:#757575;transform:scale(1,1.04);transform-origin:0 13px;">City</div>
<div class="t" style="left:1900px;top:1293px;font-size:20px;-webkit-text-stroke:.22px;color:#111;transform:scale(1,1.04);transform-origin:0 17px;">Miami</div>
<div class="r" style="left:1900px;top:1322px;width:587.8px;height:1.2px;background:#e0e0e0;"></div>
<div class="t" style="left:1900px;top:1325px;font-size:16px;-webkit-text-stroke:.22px;color:#848484;transform:scale(1,1.04);transform-origin:0 13px;">Enter a City</div>
<div class="t" style="left:29.2px;top:1410px;font-size:15px;font-weight:700;color:#757575;transform:scale(1,1.04);transform-origin:0 13px;">Address Line 1</div>
<div class="r" style="left:864.6px;top:1092px;width:800px;height:319px;background:#fff;box-shadow:0 1.5px 6px rgba(0,0,0,.22), 0 2px 9px rgba(0,0,0,.1)"><div class="r" style="left:0;top:0;width:770.6px;height:63.8px;background:#eee"></div><div class="r" style="left:770.4px;top:0;width:2px;height:319px;background:#e9e9e9"></div><div class="r" style="left:772.4px;top:0;width:26.2px;height:319px;background:#fafafa"></div><div class="r" style="left:798.6px;top:0;width:1.4px;height:319px;background:#f0f0f0"></div><div class="r" style="left:778.4px;top:0;width:16px;height:20px;background:#c1c1c1;border-radius:8px"></div></div>
<div class="t" style="left:885px;top:1116px;font-size:18.75px;-webkit-text-stroke:.22px;color:#212121;transform:scale(1,1.04);transform-origin:0 15px;">Active Military</div>
<div class="t" style="left:885px;top:1180px;font-size:18.75px;-webkit-text-stroke:.22px;color:#212121;transform:scale(1,1.04);transform-origin:0 15px;">Acupuncture</div>
<div class="t" style="left:885px;top:1244px;font-size:18.75px;-webkit-text-stroke:.22px;color:#212121;transform:scale(1,1.04);transform-origin:0 15px;">Acute Care</div>
<div class="t" style="left:885px;top:1308px;font-size:18.75px;-webkit-text-stroke:.22px;color:#212121;transform:scale(1,1.04);transform-origin:0 15px;">Adolescent</div>
<div class="t" style="left:885px;top:1372px;font-size:18.75px;-webkit-text-stroke:.22px;color:#212121;transform:scale(1,1.04);transform-origin:0 15px;">Adult</div>
<div class="r" style="left:0;top:1346px;width:2506px;height:72px;background:linear-gradient(180deg,rgba(0,0,0,0) 0,rgba(0,0,0,.006) 25%,rgba(0,0,0,.022) 55%,rgba(0,0,0,.045) 80%,rgba(0,0,0,.076) 100%);-webkit-mask-image:radial-gradient(ellipse 250px 105px at 100% 100%,rgba(0,0,0,0) 0,rgba(0,0,0,.12) 30%,rgba(0,0,0,.6) 65%,#000 100%);mask-image:radial-gradient(ellipse 250px 105px at 100% 100%,rgba(0,0,0,0) 0,rgba(0,0,0,.12) 30%,rgba(0,0,0,.6) 65%,#000 100%)"></div>
<div class="r" style="left:850.9px;top:996.4px;width:828.5px;height:417.4px;border:solid #ea3323;border-width:6.4px 6.1px 5.7px 6.1px;box-shadow:0 2px 3px rgba(0,0,0,.10)"></div>
</div>
</body>
</html>
